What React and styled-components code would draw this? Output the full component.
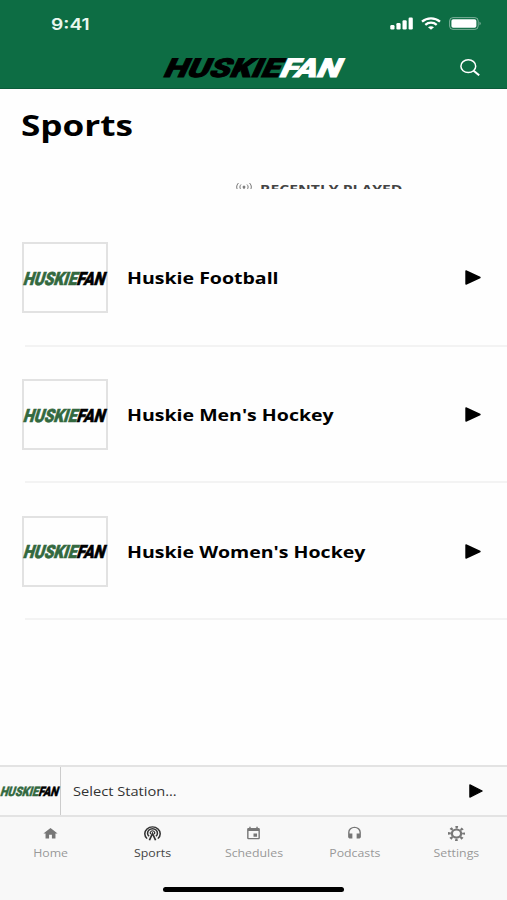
import React, { useState } from "react";
import styled, { createGlobalStyle } from "styled-components";
import { MdHome, MdEvent, MdHeadset } from "react-icons/md";

const sports = [
    { id: 0, name: "Huskie Football" },
    { id: 1, name: "Huskie Men's Hockey" },
    { id: 2, name: "Huskie Women's Hockey" },
];

const tabs = [
    { id: 0, name: "Home", icon: <MdHome preserveAspectRatio="none" /> },
    { id: 1, name: "Sports", icon: <BroadcastIcon /> },
    { id: 2, name: "Schedules", icon: <MdEvent preserveAspectRatio="none" /> },
    { id: 3, name: "Podcasts", icon: <MdHeadset preserveAspectRatio="none" /> },
    { id: 4, name: "Settings", icon: <GearIcon /> },
];

function Logo({ first, second, width, height }) {
    return (
        <LogoSvg width={width} height={height} viewBox="0 0 182 20" preserveAspectRatio="none">
            <g transform="translate(-1 19.5) skewX(-25)">
                <text x="0" y="0" textLength="116" lengthAdjust="spacingAndGlyphs" fill={first} stroke={first}>HUSKIE</text>
                <text x="116" y="0" textLength="60" lengthAdjust="spacingAndGlyphs" fill={second} stroke={second}>FAN</text>
            </g>
        </LogoSvg>
    );
}

function BroadcastIcon() {
    return (
        <svg viewBox="1 1 22 22" preserveAspectRatio="none" fill="none" stroke="currentColor" strokeWidth="2">
            <path d="M5 19.5A10 10 0 1 1 19 19.5" />
            <path d="M7.6 16A6.4 6.4 0 1 1 16.4 16" />
            <path d="M9.7 12.8A2.9 2.9 0 1 1 14.3 12.8" strokeWidth="1.6" />
            <path d="M8 22 12 12l4 10" strokeWidth="2.2" />
        </svg>
    );
}

function GearIcon() {
    return (
        <svg viewBox="1 1 22 22" preserveAspectRatio="none" fill="none" stroke="currentColor">
            <circle cx="12" cy="12" r="6" strokeWidth="3" />
            <circle cx="12" cy="12" r="9.2" strokeWidth="3.8" strokeDasharray="3.2 4.025" strokeDashoffset="1.6" />
        </svg>
    );
}

function SignalIcon() {
    return (
        <svg width="23" height="13" viewBox="0 0 23 13" fill="#fff">
            <rect x="0.3" y="8" width="4.2" height="4.5" rx="1.2" />
            <rect x="6.4" y="6" width="4.2" height="6.5" rx="1.2" />
            <rect x="12.5" y="3.2" width="4.2" height="9.3" rx="1.2" />
            <rect x="18.6" y="0.5" width="4.2" height="12" rx="1.2" />
        </svg>
    );
}

function WifiIcon() {
    return (
        <svg width="20" height="13" viewBox="0 0 20 13" fill="none" stroke="#fff" strokeWidth="2.3">
            <path d="M1 4.6C6 0.3 14 0.3 19 4.6" />
            <path d="M4.3 7.8c3.3-2.9 8.1-2.9 11.4 0" />
            <path d="M7 10.2c1.8-1.4 4.2-1.4 6 0l-3 2.6z" fill="#fff" stroke="none" />
        </svg>
    );
}

function BatteryIcon() {
    return (
        <svg width="32" height="13" viewBox="0 0 32 13">
            <rect x="0.6" y="0.6" width="28.6" height="11.8" rx="3.4" fill="none" stroke="#fff" strokeOpacity="0.45" />
            <rect x="2.4" y="2.2" width="25" height="8.6" rx="1.8" fill="#fff" />
            <path d="M30.5 4.8c1.6.6 1.6 2.8 0 3.4z" fill="#fff" fillOpacity="0.5" />
        </svg>
    );
}

function PlayIcon({ width, height }) {
    return (
        <svg width={width} height={height} viewBox="0 0 16 15" preserveAspectRatio="none">
            <path d="M1 1 15 7.5 1 14z" fill="#000" stroke="#000" strokeWidth="1.4" strokeLinejoin="round" />
        </svg>
    );
}

export default function App() {
    const [selected, setSelected] = useState(1);

    return (
        <Screen>
            <GlobalStyle />
            <Header>
                <StatusBar>
                    <Time>9:41</Time>
                    <StatusIcons>
                        <SignalIcon />
                        <WifiIcon />
                        <BatteryIcon />
                    </StatusIcons>
                </StatusBar>
                <NavBar>
                    <span></span>
                    <Logo first="#000" second="#fff" width={182} height={20} />
                    <SearchButton aria-label="Search">
                        <svg width="20" height="17" viewBox="0 0 20 17" fill="none" stroke="#fff" strokeWidth="1.5">
                            <ellipse cx="8.3" cy="7.2" rx="7.4" ry="6.4" />
                            <path d="m13.6 11.7 5.6 4.6" strokeWidth="2" />
                        </svg>
                    </SearchButton>
                </NavBar>
            </Header>
            <Content>
                <Title>Sports</Title>
                <Recent>
                    <svg width="16" height="11" viewBox="0 0 16 11" fill="none" stroke="#777" strokeWidth="1">
                        <path d="M2.5 1c-2.4 2.5-2.4 5.5 0 8M5 2.5c-1.5 1.6-1.5 3.4 0 5M13.5 1c2.4 2.5 2.4 5.5 0 8M11 2.5c1.5 1.6 1.5 3.4 0 5M8 5v6" />
                        <circle cx="8" cy="5" r="1" fill="#777" />
                    </svg>
                    <p>RECENTLY PLAYED</p>
                </Recent>
                {sports.map((item) => <Row key={item.id}>
                    <Thumb><Logo first="#33693f" second="#000" width={84} height={14} /></Thumb>
                    <RowName>{item.name}</RowName>
                    <PlayIcon width={16} height={15} />
                </Row>)}
            </Content>
            <Player>
                <PlayerThumb><Logo first="#33693f" second="#000" width={60} height={10} /></PlayerThumb>
                <Station>Select Station...</Station>
                <PlayIcon width={14} height={14} />
            </Player>
            <TabBar>
                {tabs.map((item) => <Tab key={item.id} $active={selected === item.id} onClick={() => setSelected(item.id)}>
                    {item.icon}
                    <p>{item.name}</p>
                </Tab>)}
            </TabBar>
            <HomeArea><HomeIndicator /></HomeArea>
        </Screen>
    );
}

const GlobalStyle = createGlobalStyle`
    *{
        box-sizing: border-box;
    }
    body, p, h1{
        margin: 0;
    }
    body{
        font-family: 'Open Sans', 'Noto Sans', sans-serif;
        background: #FEFEFE;
    }
    svg{
        display: block;
        flex-shrink: 0;
    }
`;
const Screen = styled.div`
    width: 507px;
    height: 900px;
    display: flex;
    flex-direction: column;
    overflow: hidden;
    background: #FEFEFE;
`;
const Header = styled.div`
    height: 89px;
    background: #0D6D44;
    border-bottom: 1px solid #0A5C3A;
`;
const StatusBar = styled.div`
    height: 46px;
    display: flex;
    justify-content: space-between;
    align-items: center;
    padding: 1px 26px 0 51px;
`;
const Time = styled.p`
    font-family: Inter, sans-serif;
    font-weight: 600;
    font-size: 16px;
    line-height: 20px;
    color: #E9F7EF;
    transform: scaleX(1.2);
    transform-origin: left;
`;
const StatusIcons = styled.div`
    display: flex;
    align-items: center;
    gap: 8px;
`;
const NavBar = styled.div`
    height: 42px;
    display: grid;
    grid-template-columns: 1fr 182px 1fr;
    align-items: center;
`;
const LogoSvg = styled.svg`
    overflow: visible;
    text{
        font-family: Roboto, sans-serif;
        font-weight: 900;
        font-size: 26px;
        stroke-width: 0.9px;
    }
`;
const SearchButton = styled.button`
    justify-self: end;
    margin-right: 27px;
    padding: 0;
    border: none;
    background: none;
    cursor: pointer;
`;
const Content = styled.div`
    flex: 1;
`;
const Title = styled.h1`
    height: 92px;
    padding: 17px 0 0 21px;
    font-weight: 700;
    font-size: 28px;
    line-height: 38px;
    color: #000000;
    transform: scaleX(1.255);
    transform-origin: 21px 0;
`;
const Recent = styled.div`
    height: 8px;
    margin-bottom: 21px;
    padding: 0 0 0 236px;
    display: flex;
    align-items: flex-start;
    gap: 8px;
    overflow: hidden;
    svg{
        margin-top: 1px;
    }
    p{
        font-weight: 700;
        font-size: 12px;
        line-height: 17px;
        color: #444444;
        white-space: nowrap;
        transform: scaleX(1.31);
        transform-origin: left;
    }
`;
const Row = styled.div`
    height: 136.7px;
    margin-left: 25px;
    padding: 1px 26px 0 0;
    display: flex;
    align-items: center;
    border-bottom: 2px solid #F3F3F3;
`;
const Thumb = styled.div`
    width: 86px;
    height: 71px;
    margin-left: -3.5px;
    display: flex;
    align-items: center;
    justify-content: center;
    border: 2px solid #E2E2E2;
`;
const RowName = styled.p`
    flex: 1;
    min-width: 0;
    margin: 1px 0 0 19.5px;
    font-weight: 700;
    font-size: 16px;
    line-height: 22px;
    color: #000000;
    white-space: nowrap;
    transform: scaleX(1.22);
    transform-origin: left;
    pointer-events: none;
`;
const Player = styled.div`
    height: 52px;
    display: flex;
    align-items: center;
    padding-right: 24px;
    background: #FAFAFA;
    border-top: 2px solid #E3E3E3;
    border-bottom: 2px solid #E3E3E3;
`;
const PlayerThumb = styled.div`
    width: 61px;
    height: 48px;
    display: flex;
    align-items: center;
    border-right: 1px solid #CCCCCC;
`;
const Station = styled.p`
    flex: 1;
    margin-left: 12px;
    font-size: 13px;
    line-height: 18px;
    color: #333333;
    transform: scaleX(1.125);
    transform-origin: left;
`;
const TabBar = styled.div`
    height: 46px;
    display: grid;
    grid-template-columns: repeat(5, 1fr);
    background: #F8F8F8;
`;
const Tab = styled.div`
    display: flex;
    flex-direction: column;
    align-items: center;
    padding-top: 9px;
    color: ${props => props.$active ? "#333333" : "#777777"};
    cursor: pointer;
    svg{
        width: 17px;
        height: 15px;
    }
    p{
        margin-top: 4px;
        font-size: 11px;
        line-height: 16px;
        color: ${props => props.$active ? "#444444" : "#999999"};
        transform: scaleX(1.12);
    }
`;
const HomeArea = styled.div`
    height: 37px;
    display: flex;
    justify-content: center;
    align-items: flex-end;
    padding-bottom: 8px;
    background: #F8F8F8;
`;
const HomeIndicator = styled.div`
    width: 181px;
    height: 5px;
    border-radius: 3px;
    background: #000000;
`;
